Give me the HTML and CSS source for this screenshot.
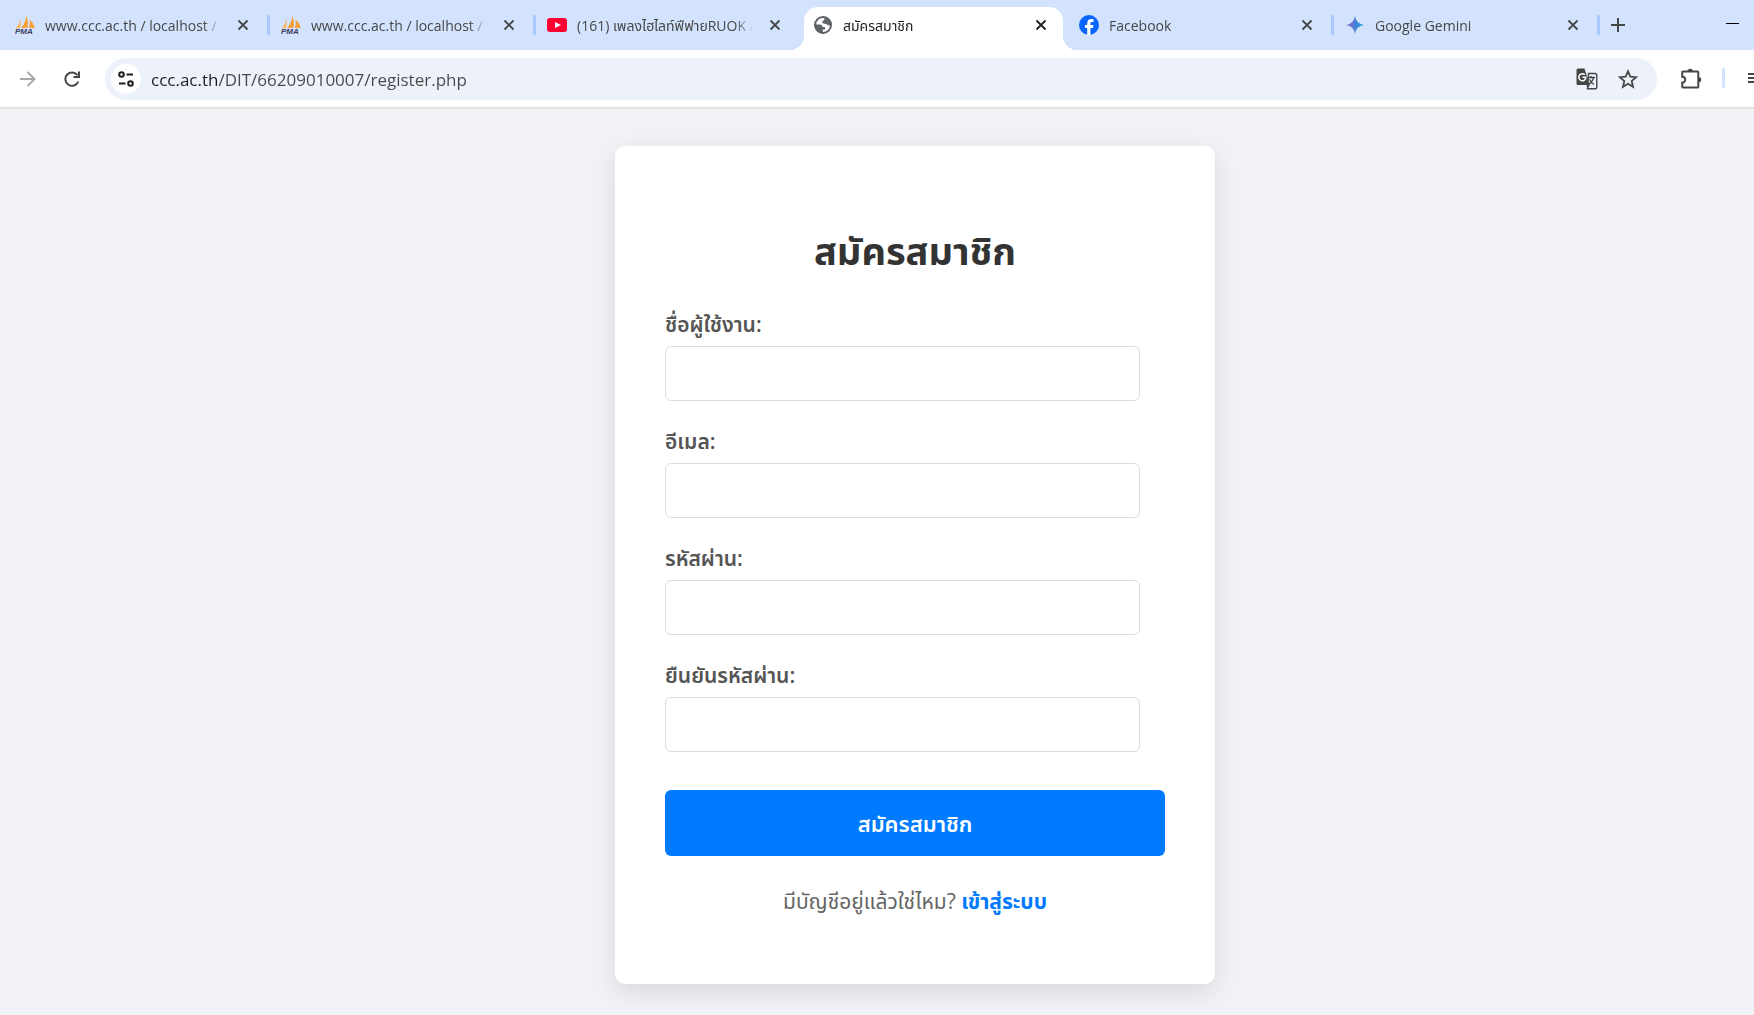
FILE: index.html
```html
<!DOCTYPE html>
<html lang="th">
<head>
    <meta charset="UTF-8">
    <meta name="viewport" content="width=device-width, initial-scale=1.0">
    <title>สมัครสมาชิก</title>
    <link rel="stylesheet" href="styles.css">
</head>
<body>
    <svg class="symbols" aria-hidden="true">
        <symbol id="close" viewBox="0 0 12 12">
            <path d="M1.5 1.5l9 9M10.5 1.5l-9 9" fill="none" stroke="currentColor" stroke-width="1.8"/>
        </symbol>
        <symbol id="pma" viewBox="0 0 20 20">
            <path d="M6 3.500L5.300 12.800 0.800 13.600Q4.500 9 6 3.500z" fill="#fbb45c"/>
            <path d="M11.500 0.500Q13.500 7 12.600 12.600L6.300 13.200Q10.500 8 11.500 0.500z" fill="#f89c2c"/>
            <path d="M14.500 4.500Q19.500 9 19.400 13.200L13.800 12.700Q15.400 9 14.500 4.500z" fill="#f6a137"/>
            <text x="0" y="19" class="pma-text">PMA</text>
        </symbol>
    </svg>

    <header class="browser">
        <div class="tab-bar">
            <div class="tab">
                <svg class="tab-icon"><use href="#pma"/></svg>
                <a href="#" class="tab-title">www.ccc.ac.th / localhost / db</a>
                <button class="tab-close" aria-label="Close"><svg><use href="#close"/></svg></button>
            </div>
            <div class="tab divided">
                <svg class="tab-icon"><use href="#pma"/></svg>
                <a href="#" class="tab-title">www.ccc.ac.th / localhost / db</a>
                <button class="tab-close" aria-label="Close"><svg><use href="#close"/></svg></button>
            </div>
            <div class="tab divided">
                <svg class="tab-icon" viewBox="0 0 20 20">
                    <rect x="0" y="3" width="20" height="14" rx="3" fill="#ff0033"/>
                    <path d="M8 7l6 3-6 3z" fill="#fff"/>
                </svg>
                <a href="#" class="tab-title">(161) เพลงไฮไลท์ฟีฟายRUOK ล่าสุด</a>
                <button class="tab-close" aria-label="Close"><svg><use href="#close"/></svg></button>
            </div>
            <div class="tab active">
                <svg class="tab-icon" viewBox="0 0 20 20">
                    <circle cx="10" cy="10" r="8" fill="none" stroke="#5f6368" stroke-width="2"/>
                    <path d="M10.500 1.500C15 1.500 18.500 5 18.700 9.500 17 11 15 10.500 14 9.500 13 8.500 11 9 9.800 8.300 8.800 7.500 9.200 6 10.500 5.500 11.800 5 11.800 3.500 10.500 1.500zM1.500 9.500H6.500C8.500 9.500 9.500 10.500 9.500 12H12V14.500H9.800V18.500C5 18.500 1.500 14.500 1.500 9.500z" fill="#5f6368"/>
                </svg>
                <a href="#" class="tab-title">สมัครสมาชิก</a>
                <button class="tab-close" aria-label="Close"><svg><use href="#close"/></svg></button>
            </div>
            <div class="tab">
                <svg class="tab-icon" viewBox="0 0 20 20">
                    <circle cx="10" cy="10" r="10" fill="#0866ff"/>
                    <path d="M8.200 20V13H6V9.900h2.200V8.600C8.200 5.300 9.800 4 12.700 4c.6 0 1.400.1 1.800.2v2.700h-1.300c-1.400 0-1.800.6-1.800 1.800v1.200h3L13.900 13h-2.500v7z" fill="#fff"/>
                </svg>
                <a href="#" class="tab-title">Facebook</a>
                <button class="tab-close" aria-label="Close"><svg><use href="#close"/></svg></button>
            </div>
            <div class="tab divided">
                <svg class="tab-icon" viewBox="0 0 20 20">
                    <defs>
                        <linearGradient id="spark" x1="0" x2="1">
                            <stop offset="0" stop-color="#9168c0"/>
                            <stop offset="0.5" stop-color="#4a80d8"/>
                            <stop offset="1" stop-color="#1ba1e3"/>
                        </linearGradient>
                    </defs>
                    <path d="M10 1Q11.200 8.800 19 10 11.200 11.200 10 19 8.800 11.200 1 10 8.800 8.800 10 1z" fill="url(#spark)"/>
                </svg>
                <a href="#" class="tab-title">Google Gemini</a>
                <button class="tab-close" aria-label="Close"><svg><use href="#close"/></svg></button>
            </div>
            <div class="tab-actions divided">
                <button class="icon-btn" aria-label="New tab">
                    <svg width="14" height="14" viewBox="0 0 14 14"><path d="M7 0v14M0 7h14" stroke="#444746" stroke-width="2"/></svg>
                </button>
                <button class="icon-btn" aria-label="Minimize">
                    <svg width="14" height="14" viewBox="0 0 14 14"><path d="M0 5.500h13" stroke="#000"/></svg>
                </button>
            </div>
        </div>

        <div class="toolbar">
            <button class="icon-btn" aria-label="Forward">
                <svg width="16" height="16" viewBox="0 0 16 16" fill="none" stroke="#a8a8a8" stroke-width="2"><path d="M0 8h14M7.500 1l7 7-7 7"/></svg>
            </button>
            <button class="icon-btn" aria-label="Reload">
                <svg width="16" height="16" viewBox="0 0 16 16" fill="none" stroke="#444746" stroke-width="2"><path d="M14.300 10.500A6.700 6.700 0 1 1 13.500 4.200"/><path d="M15 0.500V6H9.500"/></svg>
            </button>
            <div class="address">
                <button class="site-info" aria-label="Site information">
                    <svg width="16" height="16" viewBox="0 0 16 16" fill="none" stroke="#1f1f1f" stroke-width="2"><circle cx="3.500" cy="3.500" r="2.300"/><path d="M8.500 3.500H15M1 12.500h6.500"/><circle cx="12.500" cy="12.500" r="2.300"/></svg>
                </button>
                <input type="text" class="url" aria-label="Address" value="ccc.ac.th/DIT/66209010007/register.php">
                <button class="icon-btn" aria-label="Translate">
                    <svg width="22" height="22" viewBox="0 0 22 22">
                        <path d="M12.500 5.500H19a1.800 1.800 0 0 1 1.800 1.800v12a1.500 1.500 0 0 1-1.500 1.500H11.500z" fill="#edf1fa" stroke="#444746" stroke-width="1.400"/>
                        <path d="M11.500 9.500h7.500M15.200 8v1.500M17.500 9.500Q16.500 14 12.500 16.500M13.500 11.500Q15 14.500 18 16.500" fill="none" stroke="#444746" stroke-width="1.300"/>
                        <path d="M2 .5h6.500L13.500 17H2A1.500 1.500 0 0 1 .5 15.500V2A1.500 1.500 0 0 1 2 .5z" fill="#444746"/>
                        <path d="M8.800 6.800A3.500 3.500 0 1 0 9.800 9.300H6.500" fill="none" stroke="#fff" stroke-width="1.500"/>
                        <path d="M10.500 17h3.500l-2.500 3.800z" fill="#444746"/>
                    </svg>
                </button>
                <button class="icon-btn" aria-label="Bookmark">
                    <svg width="20" height="20" viewBox="0 0 20 20"><path d="M10 2.300l2.300 5.400 5.900.5-4.500 3.900 1.400 5.700L10 14.700l-5.100 3.100 1.400-5.700-4.500-3.900 5.900-.5z" fill="none" stroke="#444746" stroke-width="1.800"/></svg>
                </button>
            </div>
            <div class="extensions">
                <button class="icon-btn" aria-label="Extensions">
                    <svg width="22" height="22" viewBox="0 0 22 22"><path d="M3 3.500h14.500a.8.8 0 0 1 .8.8v14.400a.8.800 0 0 1-.8.800H3a.8.800 0 0 1-.8-.8v-4a3 3 0 0 0 0-6V4.300a.8.800 0 0 1 .8-.8z" fill="none" stroke="#444746" stroke-width="2"/><path d="M7.500 3.500a2.700 2.700 0 0 1 5.400 0zM18.500 9a2.700 2.700 0 0 1 0 5.400z" fill="#444746"/></svg>
                </button>
                <button class="icon-btn media divided" aria-label="Media">
                    <svg width="18" height="18" viewBox="0 0 18 18"><path d="M0 4h13M0 8h13M0 12h7" stroke="#444746" stroke-width="2"/></svg>
                </button>
            </div>
        </div>
    </header>

    <main>
        <div class="container">
            <h2>สมัครสมาชิก</h2>
            <form>
                <label for="username">ชื่อผู้ใช้งาน:</label>
                <input type="text" id="username" name="username">
                <label for="email">อีเมล:</label>
                <input type="email" id="email" name="email">
                <label for="password">รหัสผ่าน:</label>
                <input type="password" id="password" name="password">
                <label for="confirm_password">ยืนยันรหัสผ่าน:</label>
                <input type="password" id="confirm_password" name="confirm_password">
                <button type="submit" class="register-btn">สมัครสมาชิก</button>
            </form>
            <p class="login">มีบัญชีอยู่แล้วใช่ไหม? <a href="login.php">เข้าสู่ระบบ</a></p>
        </div>
    </main>
</body>
</html>
```
FILE: styles.css
```css
* {
    box-sizing: border-box;
}
body {
    margin: 0;
    min-height: 100vh;
    display: flex;
    flex-direction: column;
    overflow-x: hidden;
    font-family: "Open Sans", "Noto Sans Thai", "Noto Sans", sans-serif;
    background: #f0f2f5;
}
button {
    border: none;
    padding: 0;
    background: none;
    font-family: inherit;
    cursor: pointer;
}
svg {
    display: block;
}
.symbols {
    display: none;
}
.pma-text {
    font: italic bold 8px "Liberation Sans", sans-serif;
    fill: #3b3b63;
}

/* browser bar */
.browser {
    background: #fff;
    border-bottom: 2px solid #e1e3e1;
}
.tab-bar {
    display: flex;
    height: 50px;
    padding-left: 1px;
    background: #d3e3fd;
    overflow: hidden;
}
.tab {
    position: relative;
    display: flex;
    align-items: center;
    flex: 0 0 266px;
    min-width: 0;
    gap: 10px;
    padding: 0 18px 0 14px;
}
.divided::before {
    content: "";
    position: absolute;
    left: 0;
    top: 15px;
    width: 3px;
    height: 20px;
    border-radius: 2px;
    background: #a8c7fa;
}
.tab-icon {
    flex: none;
    width: 20px;
    height: 20px;
}
.tab-title {
    flex: 1;
    min-width: 0;
    margin-right: 6px;
    padding-top: 2px;
    overflow: hidden;
    white-space: nowrap;
    font-size: 14px;
    line-height: 30px;
    color: #474747;
    text-decoration: none;
    -webkit-mask-image: linear-gradient(to right, #000 90%, transparent);
    mask-image: linear-gradient(to right, #000 90%, transparent);
}
.tab-close {
    color: #444746;
}
.tab-close svg {
    width: 12px;
    height: 12px;
}
.active {
    z-index: 1;
}
.active > * {
    z-index: 1;
}
.active .tab-title,
.active .tab-close {
    color: #1f1f1f;
}
.active::before {
    content: "";
    position: absolute;
    inset: 7px 2px 0 5px;
    border-radius: 14px 14px 0 0;
    background: #fff;
}
.active::after {
    content: "";
    position: absolute;
    bottom: 0;
    left: -9px;
    right: -12px;
    height: 14px;
    background:
        radial-gradient(circle at 0 0, transparent 14px, #fff 14px) left / 14px 14px no-repeat,
        radial-gradient(circle at 100% 0, transparent 14px, #fff 14px) right / 14px 14px no-repeat;
}
.tab-actions {
    position: relative;
    flex: 1;
    display: flex;
    align-items: center;
    justify-content: space-between;
    padding: 0 14px;
}
.toolbar {
    display: flex;
    align-items: center;
    gap: 28px;
    padding: 8px 0 7px 20px;
    overflow: hidden;
}
.address {
    flex: 1;
    display: flex;
    align-items: center;
    gap: 20px;
    height: 42px;
    margin-left: -3px;
    padding: 0 19px 0 6px;
    border-radius: 21px;
    background: #edf1fa;
}
.site-info {
    display: grid;
    place-items: center;
    flex: none;
    width: 30px;
    height: 30px;
    border-radius: 50%;
    background: #fff;
}
.url {
    flex: 1;
    min-width: 0;
    margin-left: -10px;
    padding: 2px 0 0;
    border: none;
    outline: none;
    font-family: inherit;
    font-size: 17px;
    line-height: 26px;
    color: transparent;
    /* the host name is darker than the path */
    background: linear-gradient(to right, #1f1f1f 66px, #474747 66px);
    -webkit-background-clip: text;
    background-clip: text;
}
.extensions {
    display: flex;
    gap: 20px;
    margin-left: -5px;
}
.media {
    position: relative;
    width: 32px;
    padding-left: 26px;
}
.media::before {
    top: 0;
    background: #d3e3fd;
}

/* register form */
main {
    flex: 1;
    display: flex;
    justify-content: center;
    align-items: flex-start;
    padding: 37px 20px 31px 96px;
}
.container {
    width: 100%;
    max-width: 600px;
    padding: 50px;
    border-radius: 10px;
    background: #fff;
    box-shadow: 0 8px 24px rgba(0, 0, 0, 0.1);
}
h2 {
    margin: 27px 0 34px;
    font-size: 38px;
    line-height: 54px;
    text-align: center;
    color: #333;
}
label {
    display: block;
    margin-bottom: 8px;
    font-size: 21px;
    font-weight: 600;
    line-height: 27px;
    color: #555;
}
form input {
    display: block;
    width: 95%;
    height: 55px;
    margin-bottom: 27px;
    padding: 15px;
    border: 1px solid #ddd;
    border-radius: 6px;
    font-size: 18px;
}
.register-btn {
    display: block;
    width: 100%;
    margin-top: 38px;
    padding: 18px;
    border-radius: 6px;
    background: #007bff;
    color: #fff;
    font-size: 22px;
    font-weight: 600;
    line-height: 30px;
}
.login {
    margin: 32px 0 19px;
    font-size: 21px;
    line-height: 27px;
    text-align: center;
    color: #666;
}
.login a {
    color: #007bff;
    font-weight: bold;
    text-decoration: none;
}
```
